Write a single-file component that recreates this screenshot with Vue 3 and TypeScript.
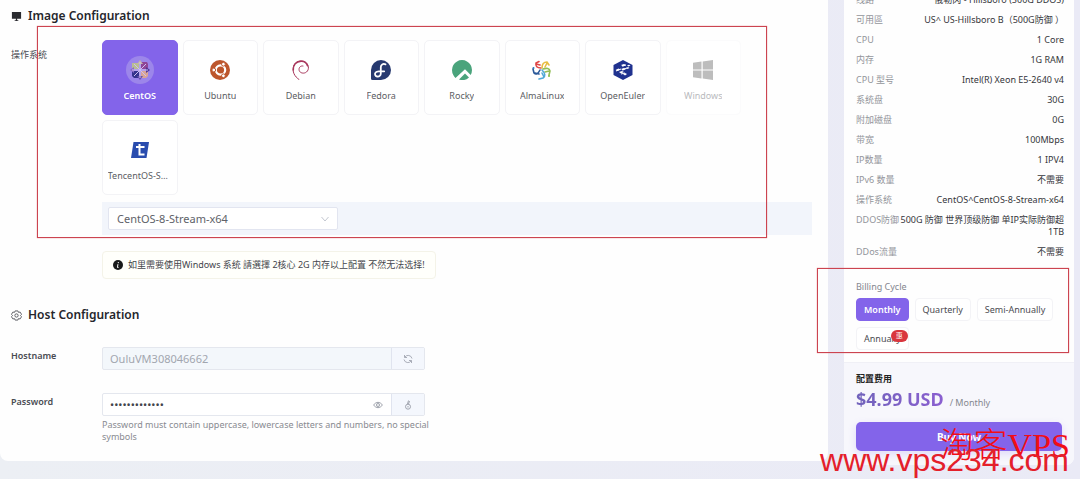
<script setup lang="ts">
import { ref } from 'vue'

interface Row { label: string; value: string }

const systems = ['CentOS', 'Ubuntu', 'Debian', 'Fedora', 'Rocky', 'AlmaLinux', 'OpenEuler', 'Windows', 'TencentOS-Server']
const selected = ref('CentOS')
const image = ref('CentOS-8-Stream-x64')
const host = ref('OuluVM308046662')
const password = ref('abcdefghijklm')
const showPassword = ref(false)
const cycles = ['Monthly', 'Quarterly', 'Semi-Annually', 'Annually']
const cycle = ref('Monthly')

const rows: Row[] = [
  { label: '线路', value: '俄勒冈 - Hillsboro (500G DDOS)' },
  { label: '可用區', value: 'US^ US-Hillsboro B（500G防御 ）' },
  { label: 'CPU', value: '1 Core' },
  { label: '内存', value: '1G RAM' },
  { label: 'CPU 型号', value: 'Intel(R) Xeon E5-2640 v4' },
  { label: '系统盘', value: '30G' },
  { label: '附加磁盘', value: '0G' },
  { label: '带宽', value: '100Mbps' },
  { label: 'IP数量', value: '1 IPV4' },
  { label: 'IPv6 数量', value: '不需要' },
  { label: '操作系统', value: 'CentOS^CentOS-8-Stream-x64' },
  { label: 'DDOS防御', value: '500G 防御 世界顶级防御 单IP实际防御超1TB' },
  { label: 'DDos流量', value: '不需要' },
]
</script>

<template>
  <div class="page">
    <main class="panel">
      <section>
        <h2>
          <svg class="hicon" viewBox="0 0 12 12"><path d="M1 1h10v7.500H1zM4 10h4v1H4zM5.300 8h1.400v2H5.300z" fill="#2a2b30" /></svg>
          Image Configuration
        </h2>
        <div class="field os-field">
          <span class="label">操作系统</span>
          <div class="content">
            <div class="os-grid">
              <button
                v-for="s in systems" :key="s" type="button" class="os"
                :class="{ on: selected === s }" :disabled="s === 'Windows'" @click="selected = s"
              >
                <span class="os-icon">
                  <svg v-if="s === 'CentOS'" viewBox="0 0 28 28">
                    <circle cx="14" cy="14" r="14" fill="#9c86ea" />
                    <g transform="translate(14 14)">
                      <path d="M-8-7h7v6h-7z" fill="#b9bd92" />
                      <path d="M1-8h6l1 2v5H1z" fill="#8f4596" />
                      <path d="M-8 1h7v7h-5l-2-2z" fill="#34348c" />
                      <path d="M1 1h7v5L6 8H1z" fill="#d9a596" />
                      <path d="M0-10 3-6H-3z" fill="#c4b7a8" /><path d="M0 10 3 6H-3z" fill="#6650ac" />
                      <path d="M-10 0-6-3V3z" fill="#8a6cc4" /><path d="M10 0 6-3V3z" fill="#4e3796" />
                      <path d="M-6-6 6 6M6-6-6 6M0-8V8M-8 0H8" stroke="#cdbfee" stroke-width="1" />
                    </g>
                  </svg>
                  <svg v-else-if="s === 'Ubuntu'" class="s20" viewBox="0 0 20 20">
                    <circle cx="10" cy="10" r="10" fill="#bd562c" />
                    <circle cx="10.500" cy="10" r="4.700" fill="none" stroke="#fff" stroke-width="2.200" />
                    <g stroke="#bd562c" fill="#fff"><circle cx="3.800" cy="10" r="1.900" /><circle cx="13.400" cy="4.200" r="1.900" /><circle cx="13.400" cy="15.800" r="1.900" /></g>
                  </svg>
                  <svg v-else-if="s === 'Debian'" class="s20" viewBox="0 0 20 20" fill="none" stroke="#a8375c" stroke-linecap="round">
                    <path d="M8 19.500C3.500 16.500 1 11.500 2.500 6.500 4 1.500 9.500-.500 14 2c4 2.200 4.500 7.500 1.500 10-2.500 2-6.500 1.200-7.300-1.500C7.500 7.500 9.500 5.500 12 6" stroke-width="1" />
                    <path d="M2.300 10C2 5 5 1.500 10 1.200c3-.200 5.500 1.500 6.500 4.500" stroke-width="1.500" />
                  </svg>
                  <svg v-else-if="s === 'Fedora'" class="s20" viewBox="0 0 20 20">
                    <path d="M10 0a10 10 0 1 1 0 20H1.500A1.500 1.500 0 0 1 0 18.500V10A10 10 0 0 1 10 0z" fill="#273a70" />
                    <path d="M14.500 4.300c-2.500-1-4.700.300-4.700 2.900v6.200c0 2.200-1.700 3.500-3.700 3.100-2-.400-2.700-2.600-1.500-4 .8-1 1.900-1.200 3.200-1.200h5.400" fill="none" stroke="#fff" stroke-width="1.800" stroke-linecap="round" />
                  </svg>
                  <svg v-else-if="s === 'Rocky'" class="s20" viewBox="0 0 20 20">
                    <path d="M1.300 15A10 10 0 1 1 18.700 15L13 9.300 3.500 18Q2 16.700 1.300 15z" fill="#4aa47c" />
                    <path d="m7 19.500 6-6 4 4A10 10 0 0 1 7 19.500z" fill="#4aa47c" />
                  </svg>
                  <svg v-else-if="s === 'AlmaLinux'" class="s20" viewBox="0 0 20 20" fill="none" stroke-width="1.600" stroke-linecap="round">
                    <path d="M9 8Q3 8 4 3L7 1.500M4 4l4 1" stroke="#df4545" />
                    <path d="M10 8q0-6 5-6l2 3M15 3l-2 4" stroke="#e8bd42" />
                    <path d="M11 9q6-2 7 2l-1 4M17 11l-4 1" stroke="#93bd56" />
                    <path d="M10 10q5 5 1 8l-4 1M12 17l-2-4" stroke="#52a9d8" />
                    <path d="M8 10q-3 6-6 3L1 9M3 13l4 1" stroke="#2b5999" />
                    <circle cx="1.500" cy="8" r="1" fill="#2b79ba" stroke="none" /><circle cx="17" cy="16" r="1" fill="#83bd46" stroke="none" />
                  </svg>
                  <svg v-else-if="s === 'OpenEuler'" class="s20" viewBox="0 0 20 20">
                    <path d="m10 0 9.500 5v10L10 20 .500 15V5z" fill="#20328f" />
                    <path d="m3 11 5-2M9 6l4-1M9 10l5-2M8 14l4-1" stroke="#fff" stroke-width="1" />
                    <g fill="#fff"><path d="m2.500 10 3-1.500 2 1-3 1.500zM8 5l3-1 2 1-3 1.500zM14 5.500l2-.8 1.500.8-2 1zM8 9l3-1 2 1-3 1.500zM6 12l3-1 2 1-3 1.500zM10 14l2-1 2 1-2 1.500zM13 8l2-1 1.500 1-2 1z" /></g>
                  </svg>
                  <svg v-else-if="s === 'Windows'" class="s20" viewBox="0 0 20 20" fill="#bdbdbd">
                    <path d="m0 2.800 8.500-1.200v7.900H0zM9.700 1.500 20 0v9.500H9.700zM0 10.600h8.500v7.900L0 17.300zM9.700 10.600H20V20L9.700 18.600z" />
                  </svg>
                  <svg v-else class="s20" viewBox="0 0 20 20">
                    <path d="M3.500 2H19l-2.500 16H1z" fill="#294cae" />
                    <path d="M9.500 4v10.500h5M6 7h8.500" fill="none" stroke="#fff" stroke-width="2" />
                  </svg>
                </span>
                <span class="os-name">{{ s }}</span>
              </button>
            </div>
            <div class="select-bar">
              <div class="select-wrap">
                <select v-model="image" aria-label="操作系统"><option>CentOS-8-Stream-x64</option></select>
                <svg class="chev" viewBox="0 0 8 8"><path d="m.500 2 3.500 4L7.500 2" fill="none" stroke="#c3c7d0" /></svg>
              </div>
            </div>
            <p class="notice">
              <svg viewBox="0 0 10 10"><circle cx="5" cy="5" r="5" fill="#18191a" /><path d="M4.900 4.200 4.500 7.500h1M5.300 2v1.200" stroke="#fff" fill="none" /></svg>
              如里需要使用Windows 系统 請選擇 2核心 2G 内存以上配置 不然无法选择!
            </p>
          </div>
        </div>
      </section>

      <section class="host">
        <h2>
          <svg class="hicon" viewBox="0 0 12 12" fill="none" stroke="#55575d"><path d="M4.500 1h3l.5 1.500 2-.2 1.500 2.500L10.300 6l1.200 1.300L10 9.700l-2-.2L7.500 11h-3L4 9.500l-2 .2L.5 7.300 1.700 6 .5 4.800 2 2.300l2 .2z" /><circle cx="6" cy="6" r="1.800" /></svg>
          Host Configuration
        </h2>
        <div class="field">
          <label class="label" for="hostname">Hostname</label>
          <div class="content">
            <div class="group off">
              <input id="hostname" v-model="host" type="text" disabled>
              <button type="button" aria-label="Refresh"><svg viewBox="0 0 10 10" fill="none" stroke="#a9adb8"><path d="M1.500 1v2.500H4M1.700 3.300A4 4 0 0 1 9 4.500M8.500 9V6.500H6M8.300 6.700A4 4 0 0 1 1 5.500" /></svg></button>
            </div>
          </div>
        </div>
        <div class="field">
          <label class="label" for="password">Password</label>
          <div class="content">
            <div class="group">
              <input id="password" v-model="password" :type="showPassword ? 'text' : 'password'">
              <button type="button" class="eye" aria-label="Show" @click="showPassword = !showPassword"><svg viewBox="0 0 10 10" fill="none" stroke="#9ea2ac"><path d="M.500 5Q5-.500 9.500 5 5 10.500.500 5z" /><circle cx="5" cy="5" r="1.500" /></svg></button>
              <button type="button" aria-label="Generate"><svg viewBox="0 0 10 10" fill="none" stroke="#a0a4ae"><path d="M5.500.500 4.500 4M6.500 1 5.500 4" /><circle cx="5" cy="6.700" r="2.500" /><path d="M5 6v1.500" /></svg></button>
            </div>
            <p class="hint">Password must contain uppercase, lowercase letters and numbers, no special symbols</p>
          </div>
        </div>
      </section>
      <div class="mark mark-os"></div>
    </main>

    <aside class="side">
      <dl>
        <div v-for="r in rows" :key="r.label" class="row"><dt>{{ r.label }}</dt><dd>{{ r.value }}</dd></div>
      </dl>
      <div class="billing">
        <h3>Billing Cycle</h3>
        <div class="cycles">
          <button v-for="c in cycles" :key="c" type="button" class="cycle" :class="{ on: cycle === c }" @click="cycle = c">
            {{ c }}<span v-if="c === 'Annually'" class="badge">惠</span>
          </button>
        </div>
        <div class="mark mark-cycle"></div>
      </div>
      <footer>
        <h4>配置费用</h4>
        <p class="cost"><strong>$4.99 USD</strong><span>/ Monthly</span></p>
        <button type="button" class="buy">Buy Now</button>
      </footer>
    </aside>
    <div class="wm wm-name">淘客VPS</div>
    <div class="wm wm-url">www.vps234.com</div>
  </div>
</template>

<style>
body { background: #ebebf4; }
</style>

<style scoped>
* { box-sizing: border-box; }
.page {
  position: relative; display: grid; grid-template-columns: minmax(0, 1fr) 230px; gap: 16px;
  align-items: start; padding: 0 6px 17px 0; overflow: hidden;
  background: linear-gradient(90deg, #eceff4, #eaeaf6);
  font-family: "Noto Sans", "Noto Sans CJK SC", sans-serif; font-size: 9px; line-height: 12px; color: #43454b;
}
h2, h3, h4, p, dl, dd { margin: 0; }
button, input, select { font: inherit; color: inherit; margin: 0; }
button { padding: 0; cursor: pointer; }
svg { display: block; }
.panel { position: relative; background: #fefefe; border-radius: 0 0 8px 8px; padding: 8px 16px 18px 11px; }
h2 { display: flex; align-items: center; gap: 6px; font-size: 12px; line-height: 16px; font-weight: 600; color: #25262c; }
.hicon { width: 11px; height: 11px; }
.field { display: grid; grid-template-columns: 91px minmax(0, 1fr); }
.os-field { margin-top: 16px; }
.label { font-weight: 600; padding-top: 9px; color: #494b52; }
.os-field .label { font-weight: 400; }
.os-grid { display: grid; grid-template-columns: repeat(8, 1fr); gap: 5px; max-width: 639px; }
.os {
  height: 75px; display: flex; flex-direction: column; align-items: center;
  border: 1px solid #f3f3f6; border-radius: 5px; background: #fff; padding-top: 14px; color: #5b5d63; gap: 5px;
}
.os.on { background: #8364ea; border-color: #8364ea; color: #fff; font-weight: 600; }
.os:disabled { color: #b9babd; border-color: #fbfbfc; }
.os-icon { height: 30px; display: flex; align-items: center; }
.os-icon svg { width: 28px; height: 28px; }
.os-icon .s20 { width: 20px; height: 20px; }
.os-name { max-width: 64px; overflow: hidden; text-overflow: ellipsis; white-space: nowrap; }
.select-bar { margin-top: 7px; padding: 5px 6px; background: #f2f5fb; }
.select-wrap { position: relative; width: 230px; }
select { appearance: none; width: 100%; height: 23px; border: 1px solid #e2e5f0; border-radius: 2px; background: #fff; padding: 0 8px; font-size: 11px; color: #606269; display: block; }
.chev { position: absolute; right: 9px; top: 8px; width: 8px; height: 8px; pointer-events: none; }
.notice { display: flex; width: fit-content; align-items: center; gap: 5px; margin-top: 16px; height: 28px; padding: 0 10px; border: 1px solid #f4f3e8; border-radius: 4px; background: #fffffb; }
.notice svg { width: 10px; height: 10px; }
.host { margin-top: 28px; }
.host h2 { margin-bottom: 24px; }
.host .field + .field { margin-top: 23px; }
.host .label { padding-top: 3px; }
.group { display: flex; width: 323px; height: 23px; border: 1px solid #e4e7ee; border-radius: 2px; background: #fff; }
input { flex: 1; min-width: 0; border: 0; background: none; padding: 0 7px; font-size: 11px; outline: 0; }
.group.off { background: #f3f7fb; }
input:disabled { color: #a2a6af; }
.group button { width: 33px; display: grid; place-items: center; border: 0; border-left: 1px solid #e0e4ef; background: #f4f7fd; }
.group .eye { width: 26px; border: 0; background: none; }
.group svg { width: 10px; height: 10px; }
.hint { width: 336px; margin-top: 3px; color: #898b91; }
.side { background: #fefefe; border-radius: 0 0 8px 8px; }
dl { display: grid; gap: 8px; padding: 0 10px 0 12px; margin-top: -6px; }
.row { display: flex; justify-content: space-between; gap: 1px; }
dt { flex: none; color: #93959b; }
dd { text-align: right; color: #35363b; }
.billing { position: relative; padding: 23px 12px 12px; }
h3 { font-size: 9px; line-height: 12px; font-weight: 400; color: #85878f; }
.cycles { display: flex; flex-wrap: wrap; gap: 6px; margin-top: 5px; }
.cycle { position: relative; height: 23px; padding: 0 7px; border: 1px solid #f3f3f6; border-radius: 4px; background: #fff; white-space: nowrap; color: #4b4c52; }
.cycle.on { background: #8364ea; border-color: #8364ea; color: #fff; font-weight: 600; }
.badge { position: absolute; right: 0; top: 2px; padding: 0 5px; border-radius: 6px; background: #d9363e; color: #fff; font-size: 7px; }
footer { background: #f7f7fc; border-top: 1px solid #f0f0f6; border-radius: 0 0 8px 8px; padding: 10px 12px 14px; }
h4 { font-size: 9px; line-height: 12px; color: #222; }
.cost { display: flex; align-items: baseline; gap: 6px; color: #85878f; line-height: 24px; margin-top: 2px; }
.cost strong { font-size: 18px; background: linear-gradient(90deg, #7163bb, #8a5fd0); background-clip: text; color: transparent; }
.buy { width: 100%; height: 29px; margin-top: 7px; border: 0; border-radius: 5px; background: #8364ea; color: #fff; font-size: 10px; font-weight: 700; box-shadow: 0 3px 8px #8364ea33; display: block; }
.mark { position: absolute; border: 1px solid #cc4450; box-shadow: 0 0 1px #e0707a; pointer-events: none; }
.mark-os { left: 37px; top: 26px; right: 61px; height: 212px; }
.mark-cycle { left: -27px; right: 5px; top: 10px; height: 85px; }
.wm { position: absolute; white-space: nowrap; color: #f20d16; pointer-events: none; }
.wm-name { right: 10px; top: 427px; font: 300 34px/38px "Liberation Serif", "Noto Sans CJK SC", serif; }
.wm-url { right: 11px; top: 442px; font: 32px/36px "Liberation Sans", sans-serif; color: #e4202b; }
</style>
